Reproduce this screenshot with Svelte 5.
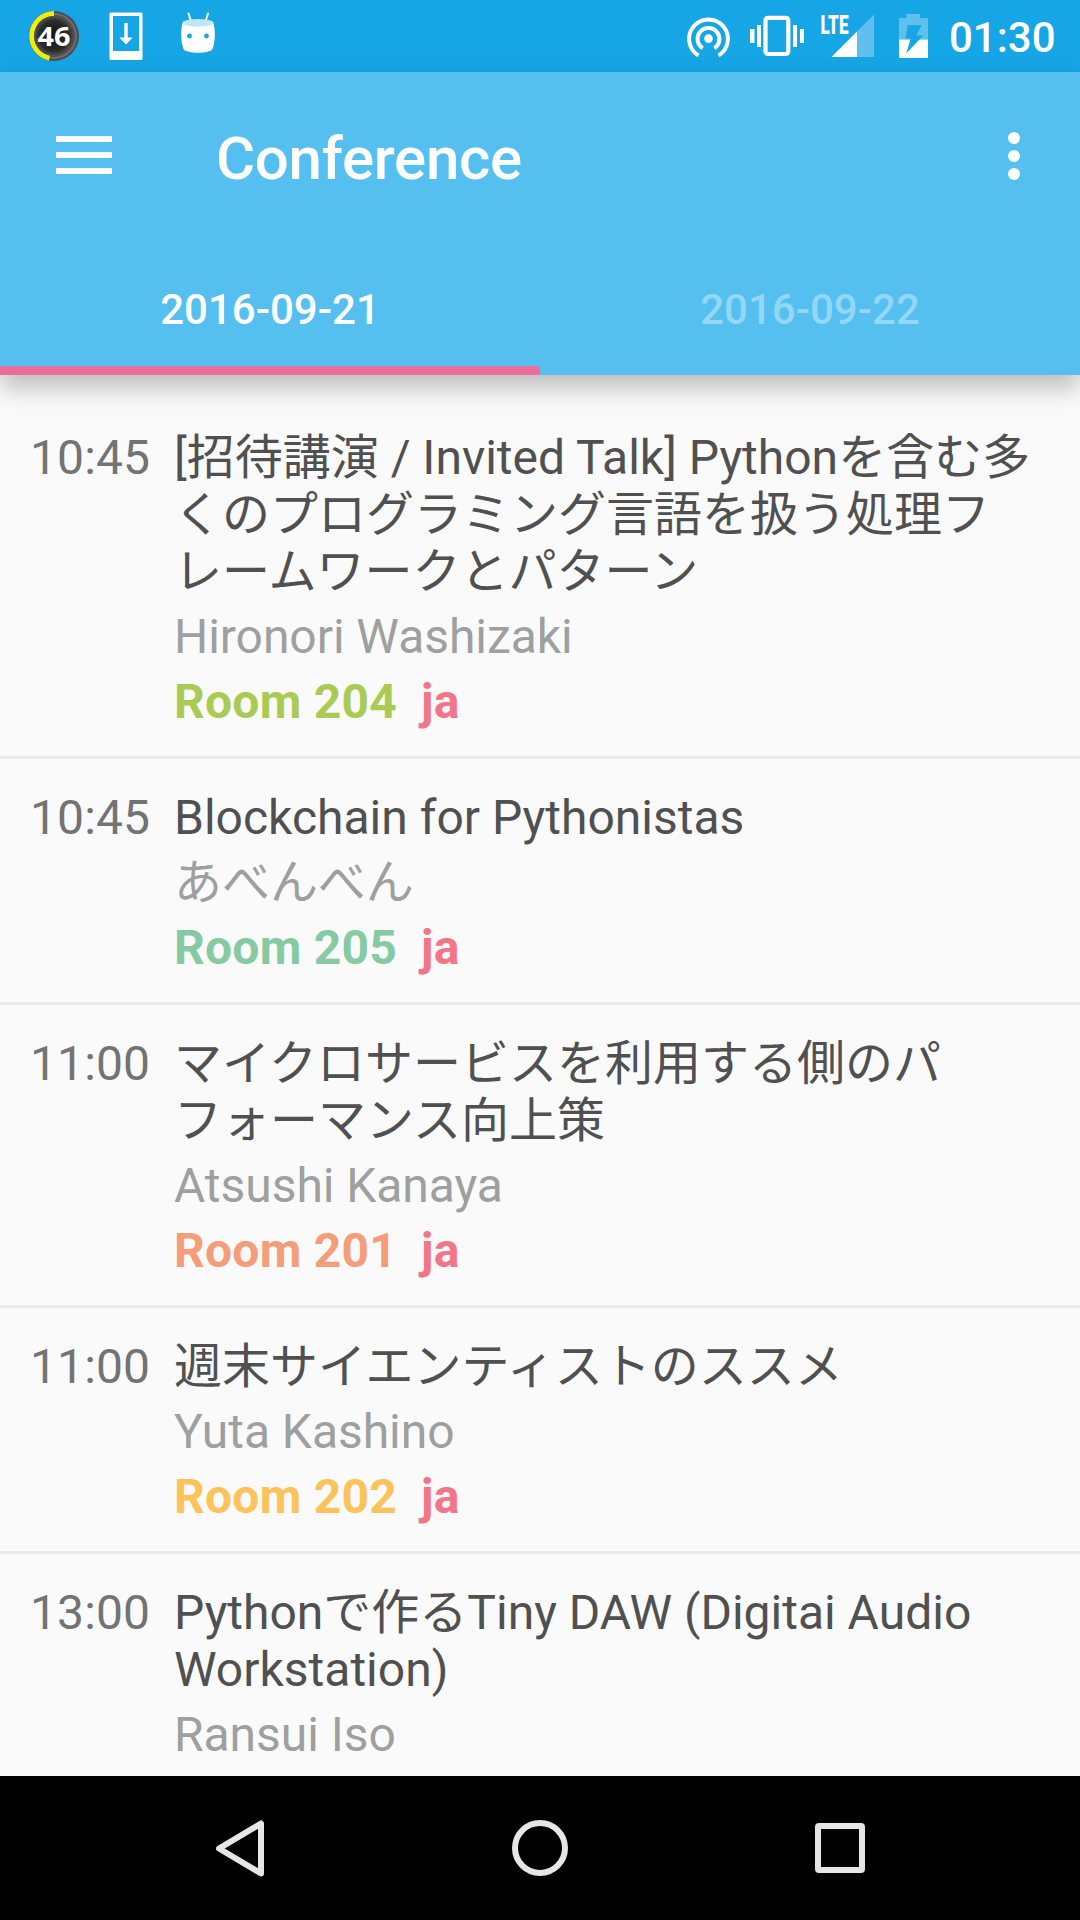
<script>
  const sessions = [
    {
      time: '10:45',
      title: ['[招待講演 / Invited Talk] Pythonを含む多', 'くのプログラミング言語を扱う処理フ', 'レームワークとパターン'],
      speaker: 'Hironori Washizaki',
      room: 'Room 204',
      tone: 'lime'
    },
    { time: '10:45', title: ['Blockchain for Pythonistas'], speaker: 'あべんべん', room: 'Room 205', tone: 'green' },
    {
      time: '11:00',
      title: ['マイクロサービスを利用する側のパ', 'フォーマンス向上策'],
      speaker: 'Atsushi Kanaya',
      room: 'Room 201',
      tone: 'orange'
    },
    { time: '11:00', title: ['週末サイエンティストのススメ'], speaker: 'Yuta Kashino', room: 'Room 202', tone: 'amber' },
    {
      time: '13:00',
      title: ['Pythonで作るTiny DAW (Digitai Audio', 'Workstation)'],
      speaker: 'Ransui Iso'
    }
  ];
</script>

<div class="screen">
  <div class="status">
    <svg class="status-left" width="230" height="72" viewBox="0 0 230 72">
      <defs>
        <radialGradient id="dial">
          <stop offset="0" stop-color="#151515" />
          <stop offset="0.75" stop-color="#2a2a2a" />
          <stop offset="1" stop-color="#555" />
        </radialGradient>
      </defs>
      <circle cx="54" cy="36" r="25" fill="#4d4d4d" />
      <circle cx="54" cy="36" r="22" fill="none" stroke="#6c6c6c" stroke-width="2" />
      <path d="M54 13.500A22.500 22.500 0 0 0 49.500 58" fill="none" stroke="#eef00c" stroke-width="5" />
      <circle cx="54" cy="36" r="20" fill="url(#dial)" />
      <text x="37.500" y="45.500" class="dial-text" textLength="33" lengthAdjust="spacingAndGlyphs">46</text>
      <path
        d="M111 12.500h30a1.500 1.500 0 0 1 1.500 1.500v44.500a1.500 1.500 0 0 1-1.500 1.500h-30a1.500 1.500 0 0 1-1.500-1.500v-44.500a1.500 1.500 0 0 1 1.500-1.500zM113 16v35h26V16z"
        fill="#fff"
        fill-rule="evenodd"
      />
      <path d="M124.300 23h3.400v14.500h5l-6.700 7-6.700-7h5z" fill="#fff" />
      <path d="M188.500 13.500l2.500 8M208 13.500l-2.500 8" stroke="#fff" stroke-width="2" stroke-linecap="round" />
      <path d="M183 21.500C180.500 29 180.500 41 183.500 49C186 54 210 54 212.500 49C215.500 41 215.500 29 213 21.500z" fill="#fff" />
      <ellipse cx="198" cy="22.800" rx="15" ry="3.900" fill="#c0e5f7" />
      <circle cx="189.500" cy="36" r="2.400" fill="#16a5e5" />
      <circle cx="206.500" cy="36" r="2.400" fill="#16a5e5" />
    </svg>
    <svg class="status-right" width="270" height="72" viewBox="670 0 270 72">
      <g fill="none" stroke="#fff" stroke-width="4">
        <path d="M698.500 55.500A19.400 19.400 0 1 1 718.500 55.500" />
        <path d="M702.700 48.200A10.900 10.900 0 1 1 714.300 48.200" />
      </g>
      <circle cx="708.500" cy="38.600" r="4.300" fill="#fff" />
      <rect x="765.500" y="17.800" width="22.800" height="36.200" rx="2.500" fill="none" stroke="#fff" stroke-width="4.200" />
      <path d="M757 25h4v22h-4zM750 29h4.500v14H750zM793 25h4v22h-4zM800 29h4v14h-4z" fill="#fff" />
      <path d="M874 14.500V57h-42.500z" fill="#60bfed" />
      <path d="M857 31.500V57h-25.500z" fill="#fff" />
      <text x="820.500" y="33.500" class="lte" textLength="28" lengthAdjust="spacingAndGlyphs">LTE</text>
      <path d="M899 39.500V18h7.200v-4h14v4h7.800v21.500z" fill="#5fbfed" />
      <path d="M899 39.500h29V58h-29z" fill="#fff" />
      <path d="M907.800 25h13.700l-5 10.500h6.700l-17 18 4.500-15h-5z" fill="#16a5e5" />
    </svg>
    <span class="clock">01:30</span>
  </div>

  <header>
    <div class="toolbar">
      <svg class="menu" width="56" height="38" viewBox="0 0 56 38"><path d="M0 0h56v6H0zM0 16h56v6H0zM0 32h56v6H0z" fill="#fff" /></svg>
      <h1>Conference</h1>
      <svg width="12" height="48" viewBox="0 0 12 48" fill="#fff"><circle cx="6" cy="6" r="6" /><circle cx="6" cy="24" r="6" /><circle cx="6" cy="42" r="6" /></svg>
    </div>
    <div class="tabs">
      <div class="tab active">2016-09-21</div>
      <div class="tab">2016-09-22</div>
    </div>
  </header>

  <main>
    {#each sessions as s}
      <article>
        <time>{s.time}</time>
        <div class="info">
          <h2>{#each s.title as line}<span>{line}</span>{/each}</h2>
          <p class="speaker">{s.speaker}</p>
          {#if s.room}
            <p class="meta"><span class={s.tone}>{s.room}</span><span class="lang">ja</span></p>
          {/if}
        </div>
      </article>
    {/each}
  </main>

  <nav>
    <svg width="1080" height="144" viewBox="0 0 1080 144" fill="none" stroke="#e6e6e6" stroke-width="6" stroke-linejoin="round">
      <path d="M261 47.500V97.500L219 72.500z" />
      <circle cx="540" cy="72" r="25" />
      <rect x="818" y="50" width="44" height="44" rx="1" />
    </svg>
  </nav>
</div>

<style>
  :global(body) {
    margin: 0;
  }
  .screen {
    width: 1080px;
    height: 1920px;
    display: flex;
    flex-direction: column;
    overflow: hidden;
    background: #fafafa;
    font-family: Roboto, 'Noto Sans CJK JP', sans-serif;
  }
  .status {
    flex: none;
    height: 72px;
    display: flex;
    background: #16a5e5;
    color: #fff;
  }
  .status-right {
    margin-left: auto;
  }
  .clock {
    width: 140px;
    padding-left: 9px;
    box-sizing: border-box;
    font-size: 42px;
    font-weight: 500;
    line-height: 76px;
    white-space: nowrap;
  }
  .dial-text {
    font: 700 27px 'Open Sans', sans-serif;
    fill: #fff;
  }
  .lte {
    font: 900 26px Roboto, sans-serif;
    fill: #fff;
  }
  header {
    flex: none;
    height: 303px;
    background: #55c0f0;
    color: #fff;
    position: relative;
    z-index: 1;
    box-shadow: 0 12px 24px rgba(0, 0, 0, 0.26);
  }
  .toolbar {
    height: 168px;
    display: flex;
    align-items: center;
    padding: 0 60px 0 56px;
  }
  .menu {
    margin-bottom: 2px;
  }
  h1 {
    margin: 0 auto 0 104px;
    font-size: 60px;
    font-weight: 500;
    line-height: 70px;
    letter-spacing: -0.3px;
    padding-top: 6px;
  }
  .tabs {
    display: flex;
    height: 135px;
  }
  .tab {
    flex: 1;
    box-sizing: border-box;
    text-align: center;
    font-size: 42px;
    font-weight: 500;
    line-height: 50px;
    padding-top: 45px;
    color: #93d7f5;
  }
  .tab.active {
    color: #fff;
    border-bottom: 9px solid #ec6d9a;
  }
  main {
    flex: 1;
    min-height: 0;
    overflow: hidden;
    padding-top: 24px;
  }
  article {
    display: flex;
    padding: 30px 24px 26px 30px;
    border-bottom: 3px solid #eaeaea;
    font-size: 48px;
    line-height: 57px;
  }
  article:last-child {
    border-bottom: 0;
  }
  time {
    width: 144px;
    flex: none;
    color: #737373;
    letter-spacing: 0.1px;
  }
  .info {
    display: flex;
    flex-direction: column;
    gap: 8px;
    white-space: nowrap;
  }
  h2,
  p {
    margin: 0;
    font-size: 48px;
    font-weight: 400;
  }
  h2 {
    color: #505050;
  }
  h2 span {
    display: block;
    height: 57px;
  }
  .speaker {
    height: 57px;
    color: #9f9f9f;
    letter-spacing: -0.05px;
  }
  .meta {
    display: flex;
    gap: 24px;
    height: 57px;
  }
  .meta span {
    font-weight: 700;
    letter-spacing: 0.25px;
  }
  .lime {
    color: #a9cb53;
  }
  .green {
    color: #85caa0;
  }
  .orange {
    color: #f59c78;
  }
  .amber {
    color: #fcc35b;
  }
  .lang {
    color: #f27688;
  }
  nav {
    flex: none;
    height: 144px;
    background: #000;
  }
  svg {
    display: block;
    flex: none;
  }
</style>
